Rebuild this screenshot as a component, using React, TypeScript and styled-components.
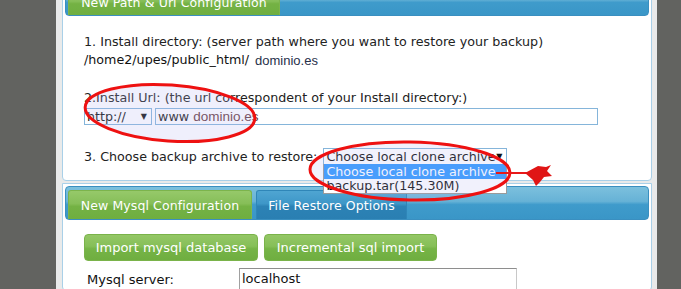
import React from "react";
import styled, { createGlobalStyle } from "styled-components";

const Global = createGlobalStyle`
  html, body { margin: 0; padding: 0; background: #626360; }
  body { font-family: "DejaVu Sans", Verdana, sans-serif; color: #222; }
  #root { width: 681px; height: 289px; overflow: hidden; position: relative; }
`;

const Page = styled.div`
  display: flex;
  width: 681px;
  height: 289px;
  overflow: hidden;
  position: relative;
`;

const Gutter = styled.div<{ $w: number }>`
  width: ${(p) => p.$w}px;
  flex: none;
  background: #626360;
`;

const Column = styled.div`
  flex: 1;
  background: #e9eaea;
  padding: 0 5px 0 6px;
  display: flex;
  flex-direction: column;
  gap: 2px;
  overflow: hidden;
`;

const Panel = styled.div<{ $top: number }>`
  background: #fff;
  border: 1px solid #a9d0e8;
  border-radius: 0 0 4px 4px;
  margin-top: ${(p) => p.$top}px;
  padding: 2px 2px 0 2px;
  position: relative;
`;

const TabBar = styled.div<{ $h: number }>`
  height: ${(p) => p.$h}px;
  border-radius: 4px;
  background: linear-gradient(#7cc0dd 0%, #66b2d6 45%, #3f9bcb 55%, #3a96c7 100%);
  border: 1px solid #3a8fc0;
  display: flex;
  align-items: flex-end;
  padding-left: 2px;
  gap: 4px;
  box-sizing: border-box;
`;

const Tab = styled.div<{ $active?: boolean; $w: number; $h: number }>`
  width: ${(p) => p.$w}px;
  height: ${(p) => p.$h}px;
  box-sizing: border-box;
  border-radius: 3px 3px 0 0;
  background: ${(p) =>
    p.$active
      ? "linear-gradient(#96c96a 0%, #86be58 45%, #74b244 55%, #6fae40 100%)"
      : "linear-gradient(#4fa5d2 0%, #3e97c8 45%, #2c82b5 55%, #2a7fb2 100%)"};
  border: 1px solid ${(p) => (p.$active ? "#7cb44c" : "#2f86b8")};
  border-bottom: none;
  color: #fff;
  font-size: 12.5px;
  display: flex;
  align-items: center;
  justify-content: center;
  letter-spacing: 0.1px;
  white-space: nowrap;
`;

const Body = styled.div`
  padding: 18px 0 0 19px;
  display: flex;
  flex-direction: column;
  height: 164px;
  box-sizing: border-box;
  font-size: 12.7px;
`;

const Line = styled.div<{ $mt?: number }>`
  font-size: 12.7px;
  line-height: 15px;
  margin-top: ${(p) => p.$mt ?? 0}px;
  white-space: nowrap;
  display: flex;
  align-items: center;
`;

const Path = styled.span`
  color: #111;
`;

const Domain = styled.span`
  font-family: "Liberation Sans", Arial, sans-serif;
  font-size: 13px;
  color: #26304a;
  margin-left: 6px;
  margin-top: 3px;
`;

const UrlRow = styled.div`
  display: flex;
  gap: 3px;
  margin-top: 3px;
  height: 17px;
`;

const Select = styled.div<{ $w: number }>`
  width: ${(p) => p.$w}px;
  height: 17px;
  box-sizing: border-box;
  border: 1px solid #85b5da;
  background: #fff;
  font-size: 12.7px;
  line-height: 15px;
  padding-left: 2px;
  display: flex;
  align-items: center;
  justify-content: space-between;
  white-space: nowrap;
  color: #111;
`;

const Caret = styled.span`
  font-size: 8px;
  margin-right: 4px;
  color: #111;
`;

const UrlInput = styled.div`
  width: 443px;
  height: 17px;
  box-sizing: border-box;
  border: 1px solid #85b5da;
  background: #fff;
  font-size: 12.7px;
  line-height: 15px;
  padding-left: 2px;
  white-space: nowrap;
`;

const Red = styled.span`
  font-family: "Liberation Sans", Arial, sans-serif;
  font-size: 13.5px;
  color: #6a3a40;
`;

const ArchiveRow = styled.div`
  display: flex;
  align-items: center;
  margin-top: 23px;
  gap: 6px;
  position: relative;
`;

const ArchiveLabel = styled.span`
  font-size: 12.7px;
`;

const ArchiveWrap = styled.div`
  position: relative;
`;

const DropList = styled.div`
  position: absolute;
  left: 0;
  top: 16px;
  width: 184px;
  border: 1px solid #9a9a9a;
  border-top: none;
  background: #fff;
  z-index: 2;
  box-sizing: border-box;
`;

const Option = styled.div<{ $sel?: boolean }>`
  height: ${(p) => (p.$sel ? 15 : 14)}px;
  line-height: ${(p) => (p.$sel ? 15 : 14)}px;
  font-size: 12.7px;
  padding-left: 2px;
  background: ${(p) => (p.$sel ? "#3399ff" : "#fff")};
  color: ${(p) => (p.$sel ? "#fff" : "#111")};
  white-space: nowrap;
`;

const Body2 = styled.div`
  padding: 14px 0 0 19px;
  display: flex;
  flex-direction: column;
  gap: 7px;
`;

const Buttons = styled.div`
  display: flex;
  gap: 6px;
`;

const GreenButton = styled.div<{ $w: number }>`
  width: ${(p) => p.$w}px;
  height: 27px;
  box-sizing: border-box;
  border-radius: 4px;
  border: 1px solid #7ab34a;
  background: linear-gradient(#94c766 0%, #86bf58 45%, #76b447 55%, #6fae40 100%);
  color: #fff;
  font-size: 13px;
  display: flex;
  align-items: center;
  justify-content: center;
  white-space: nowrap;
`;

const FieldRow = styled.div`
  display: flex;
  align-items: center;
  padding-left: 3px;
`;

const Label = styled.div`
  width: 152px;
  font-size: 13px;
  color: #111;
`;

const TextBox = styled.div`
  width: 278px;
  height: 22px;
  box-sizing: border-box;
  border: 1px solid #c8c8c8;
  border-top-color: #8e8e8e;
  border-left-color: #a0a0a0;
  font-size: 13px;
  line-height: 20px;
  padding-left: 2px;
  color: #111;
`;

const Overlay = styled.svg`
  position: absolute;
  left: 0;
  top: 0;
  pointer-events: none;
  z-index: 5;
`;

export default function App() {
  return (
    <>
      <Global />
      <Page>
        <Gutter $w={56} />
        <Column>
          <Panel $top={-17}>
            <TabBar $h={30}>
              <Tab $active $w={212} $h={26}>New Path &amp; Url Configuration</Tab>
            </TabBar>
            <Body>
              <Line>1. Install directory: (server path where you want to restore your backup)</Line>
              <Line $mt={1}>
                <Path>/home2/upes/public_html/</Path>
                <Domain>dominio.es</Domain>
              </Line>
              <Line $mt={22}>2.Install Url: (the url correspondent of your Install directory:)</Line>
              <UrlRow>
                <Select $w={68}>
                  http://
                  <Caret>▼</Caret>
                </Select>
                <UrlInput>
                  www <Red>dominio.es</Red>
                </UrlInput>
              </UrlRow>
              <ArchiveRow>
                <ArchiveLabel>3. Choose backup archive to restore:</ArchiveLabel>
                <ArchiveWrap>
                  <Select $w={184}>
                    Choose local clone archive
                    <Caret>▼</Caret>
                  </Select>
                  <DropList>
                    <Option $sel>Choose local clone archive</Option>
                    <Option>backup.tar(145.30M)</Option>
                  </DropList>
                </ArchiveWrap>
              </ArchiveRow>
            </Body>
          </Panel>
          <Panel $top={0}>
            <TabBar $h={34}>
              <Tab $active $w={184} $h={29}>New Mysql Configuration</Tab>
              <Tab $w={151} $h={29}>File Restore Options</Tab>
            </TabBar>
            <Body2>
              <Buttons>
                <GreenButton $w={174}>Import mysql database</GreenButton>
                <GreenButton $w={173}>Incremental sql import</GreenButton>
              </Buttons>
              <FieldRow>
                <Label>Mysql server:</Label>
                <TextBox>localhost</TextBox>
              </FieldRow>
            </Body2>
          </Panel>
        </Column>
        <Gutter $w={24} />
        <Overlay width={681} height={289} viewBox="0 0 681 289">
          <ellipse
            cx={170}
            cy={113}
            rx={85}
            ry={28}
            transform="rotate(4 170 113)"
            fill="rgba(180,180,240,0.22)"
            stroke="#ee1111"
            strokeWidth={3}
          />
          <ellipse
            cx={410}
            cy={171}
            rx={100}
            ry={29}
            transform="rotate(1 410 171)"
            fill="rgba(180,180,240,0.18)"
            stroke="#ee1111"
            strokeWidth={3}
          />
          <line x1={496} y1={173} x2={528} y2={173} stroke="#e81818" strokeWidth={2} />
          <polygon
            points="525,173 538,166 546,167 551,165 547,171 552,176 544,177 540,182 536,186 533,180"
            fill="#e01515"
          />
        </Overlay>
      </Page>
    </>
  );
}
